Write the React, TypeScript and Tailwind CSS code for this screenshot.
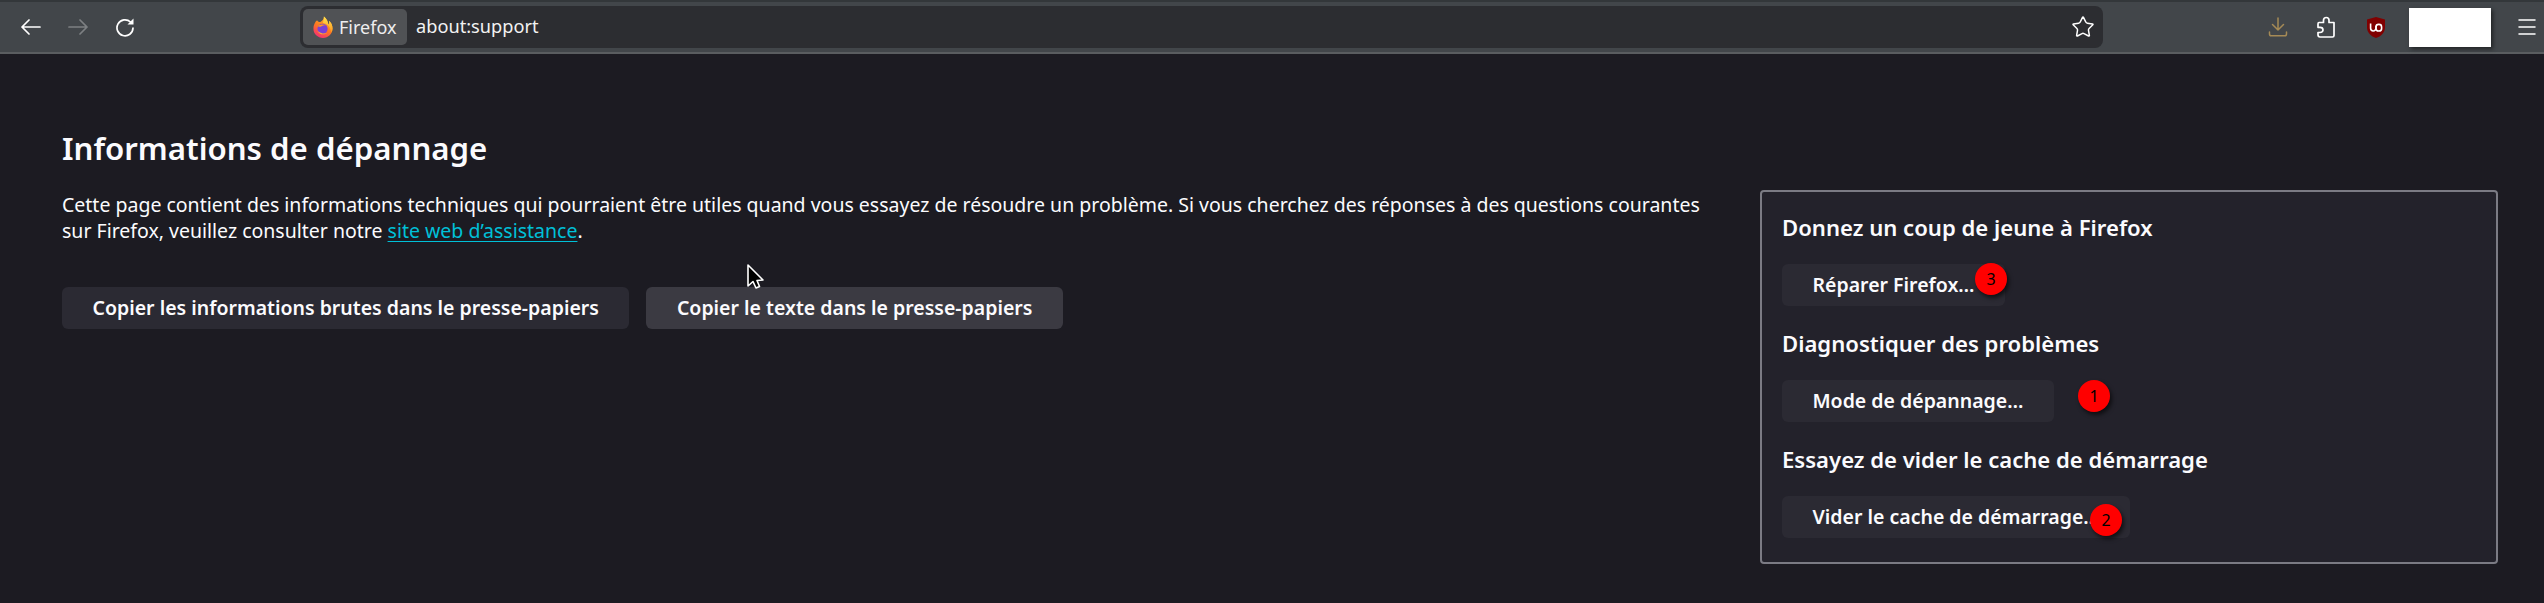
import React from "react";
import { Star, Menu } from "lucide-react";

const font = { fontFamily: '"Noto Sans", sans-serif' };

const FirefoxLogo = () => (
  <svg width="20" height="22" viewBox="0 0 22 24">
    <defs>
      <linearGradient id="ffBody" x1="0.7" y1="0" x2="0.2" y2="1">
        <stop offset="0" stopColor="#ffbd2e" />
        <stop offset="0.5" stopColor="#ff7a1f" />
        <stop offset="1" stopColor="#f5267c" />
      </linearGradient>
      <linearGradient id="ffTop" x1="0.5" y1="0" x2="0.5" y2="1">
        <stop offset="0" stopColor="#ffe14d" />
        <stop offset="1" stopColor="#ff9a1f" />
      </linearGradient>
    </defs>
    <path d="M3 6 C1 9 0.5 11 0.5 14 C0.5 19.8 5.2 24 11 24 C16.8 24 21.5 19.4 21.5 13.6 C21.5 10 20 7 17.5 5 C18.2 7.5 17.6 9 17 9.5 C16.6 6 15 3 12 0.5 C12 3.5 10.5 5 8.5 6.2 C7.5 6.8 5 6.2 4.5 4.5 C3.8 5 3.4 5.4 3 6 Z" fill="url(#ffBody)" />
    <path d="M12 0.5 C15 3 16.6 6 17 9.5 C17.6 9 18.2 7.5 17.5 5 C20 7 21.5 10 21.5 13.6 C21.5 15 21 16.5 20 18 C19.5 12 16 8.5 11 7.5 C11.5 5 12.3 3 12 0.5 Z" fill="url(#ffTop)" />
    <circle cx="10.5" cy="14" r="5.6" fill="#7b3fd6" />
    <path d="M5 11 C7 9 12 8.5 14.5 10 C12 10 10 10.5 9 11.5 C7.5 12 6 11.8 5 11 Z" fill="#ff9a1f" />
    <path d="M4.8 16 C6.5 20 12 21.5 15.5 18.5 C12.5 19.8 8 19 4.8 16 Z" fill="#ffb02e" />
  </svg>
);

const UBlock = () => (
  <svg width="18" height="21" viewBox="0 0 18 21">
    <path d="M9 0 L18 2.6 V10.5 C18 15.5 14 19.5 9 21 C4 19.5 0 15.5 0 10.5 V2.6 Z" fill="#800000" />
    <path d="M3.6 6.5 V11.3 C3.6 14.8 9 14.8 9 11.3 V8.8" fill="none" stroke="#fff" strokeWidth="1.6" />
    <rect x="9" y="7.4" width="5.6" height="6.6" rx="2.6" fill="none" stroke="#fff" strokeWidth="1.6" />
  </svg>
);

const BackArrow = ({ className }: { className: string }) => (
  <svg width="20" height="16" viewBox="0 0 20 16" fill="none" stroke="currentColor" strokeWidth="1.7" strokeLinecap="round" strokeLinejoin="round" className={className}>
    <path d="M1 8 H19 M8 1 L1 8 L8 15" />
  </svg>
);

const Reload = () => (
  <svg width="20" height="20" viewBox="0 0 20 20" fill="none" className="text-white">
    <path d="M15.5 5 A8 8 0 1 0 18 11" stroke="currentColor" strokeWidth="1.7" strokeLinecap="round" />
    <path d="M18.5 1.5 V7.5 H12.5 Z" fill="currentColor" />
  </svg>
);

const DownloadIcon = () => (
  <svg width="20" height="20" viewBox="0 0 20 20" fill="none" stroke="#a58a56" strokeWidth="1.5" strokeLinecap="round" strokeLinejoin="round">
    <path d="M10 1 V13 M4.5 7.5 L10 13 L15.5 7.5" />
    <path d="M1.5 15 V17 C1.5 18 2.2 18.8 3.2 18.8 H16.8 C17.8 18.8 18.5 18 18.5 17 V15" />
  </svg>
);

const PuzzleIcon = () => (
  <svg width="20" height="22" viewBox="0 0 20 22" fill="none" stroke="#fff" strokeWidth="1.7" strokeLinejoin="round">
    <path d="M3 6.5 H7.5 V4.2 C7.5 0.6 13 0.6 13 4.2 V6.5 H18 V19.5 C18 20.5 17.4 21 16.5 21 H4 C2.6 21 2 20 2 18.8 V16.5 H4 C8 16.5 8 11.3 4 11.3 H2 V8 C2 7 2.4 6.5 3 6.5 Z" />
  </svg>
);

const Badge = ({ n, className }: { n: string; className: string }) => (
  <span
    className={`absolute flex h-8 w-8 items-center justify-center rounded-full bg-[#ff0000] text-[16px] text-black shadow-[2px_3px_4px_rgba(0,0,0,0.6)] ${className}`}
  >
    {n}
  </span>
);

const PageButton = ({ children, hover }: { children: React.ReactNode; hover?: boolean }) => (
  <button
    className={`h-[42px] whitespace-nowrap rounded-[6px] px-[30.5px] text-[19.5px] font-semibold leading-none text-[#fbfbfe] ${
      hover ? "bg-[#3b3a42]" : "bg-[#2b2a33]"
    }`}
  >
    {children}
  </button>
);

export default function App() {
  return (
    <div style={font} className="h-screen overflow-hidden bg-[#1c1b22] text-[#fbfbfe]">
      <header className="flex h-[54px] items-center border-t-2 border-b-2 border-t-[#33373a] border-b-[#5a5d60] bg-[#42464a]">
        <div className="flex w-[300px] items-center gap-[27px] pl-[21px]">
          <BackArrow className="text-white" />
          <BackArrow className="rotate-180 text-[#7d8083]" />
          <Reload />
        </div>
        <div className="flex h-[42px] w-[1803px] items-center rounded-[8px] bg-[#2c2d31] p-[3px]">
          <div className="flex h-full w-[104px] items-center gap-[6px] rounded-[5px] bg-[#505255] pl-[10px] text-[18px] text-[#eeeeee]">
            <FirefoxLogo />
            <span>Firefox</span>
          </div>
          <span className="ml-[9px] flex-1 text-[18.2px] text-[#f2f2f2]">about:support</span>
          <Star size={24} strokeWidth={1.5} className="mr-[5px] text-white" />
        </div>
        <div className="ml-[165px] flex items-center">
          <DownloadIcon />
          <div className="ml-[28px]">
            <PuzzleIcon />
          </div>
          <div className="ml-[31px]">
            <UBlock />
          </div>
          <div className="ml-[24px] h-[39px] w-[82px] bg-white shadow-[2px_2px_4px_rgba(0,0,0,0.5)]" />
          <Menu size={24} strokeWidth={1.5} className="ml-[24px] text-white" />
        </div>
      </header>

      <main className="flex pl-[62px] pt-[72px]">
        <section className="relative w-[1698px]">
          <h1 className="text-[31.2px] font-semibold leading-[44px]">Informations de dépannage</h1>
          <p className="mt-[22px] w-[1650px] text-[19.5px] leading-[26px]">
            Cette page contient des informations techniques qui pourraient être utiles quand vous essayez de
            résoudre un problème. Si vous cherchez des réponses à des questions courantes sur Firefox, veuillez
            consulter notre{" "}
            <a className="text-[#00c0d8] underline underline-offset-3">site web d’assistance</a>.
          </p>
          <div className="mt-[43px] flex gap-[17px]">
            <PageButton>Copier les informations brutes dans le presse-papiers</PageButton>
            <PageButton hover>Copier le texte dans le presse-papiers</PageButton>
          </div>
          <svg className="absolute left-[683px] top-[137px]" width="20" height="28" viewBox="0 0 20 28">
            <path d="M3 2 V23 L8 18.5 L11 25 L14.5 23.5 L12 17.5 L18 17 Z" fill="#000" stroke="#fff" strokeWidth="1.6" strokeLinejoin="round" />
          </svg>
        </section>

        <aside className="mt-[64px] h-[374px] w-[738px] rounded-[4px] border-2 border-[#7b7b84] bg-[#23222b] pl-[20px] pt-[16px]">
          <h2 className="text-[22.1px] font-semibold leading-[38px]">Donnez un coup de jeune à Firefox</h2>
          <div className="relative mt-[18px] flex">
            <PageButton>Réparer Firefox…</PageButton>
            <Badge n="3" className="left-[193px] top-[-1px]" />
          </div>
          <h2 className="mt-[18px] text-[22.1px] font-semibold leading-[38px]">Diagnostiquer des problèmes</h2>
          <div className="relative mt-[18px] flex">
            <PageButton>Mode de dépannage…</PageButton>
            <Badge n="1" className="left-[296px] top-0" />
          </div>
          <h2 className="mt-[18px] text-[22.1px] font-semibold leading-[38px]">Essayez de vider le cache de démarrage</h2>
          <div className="relative mt-[18px] flex">
            <PageButton>Vider le cache de démarrage…</PageButton>
            <Badge n="2" className="left-[308px] top-[8px]" />
          </div>
        </aside>
      </main>
    </div>
  );
}
